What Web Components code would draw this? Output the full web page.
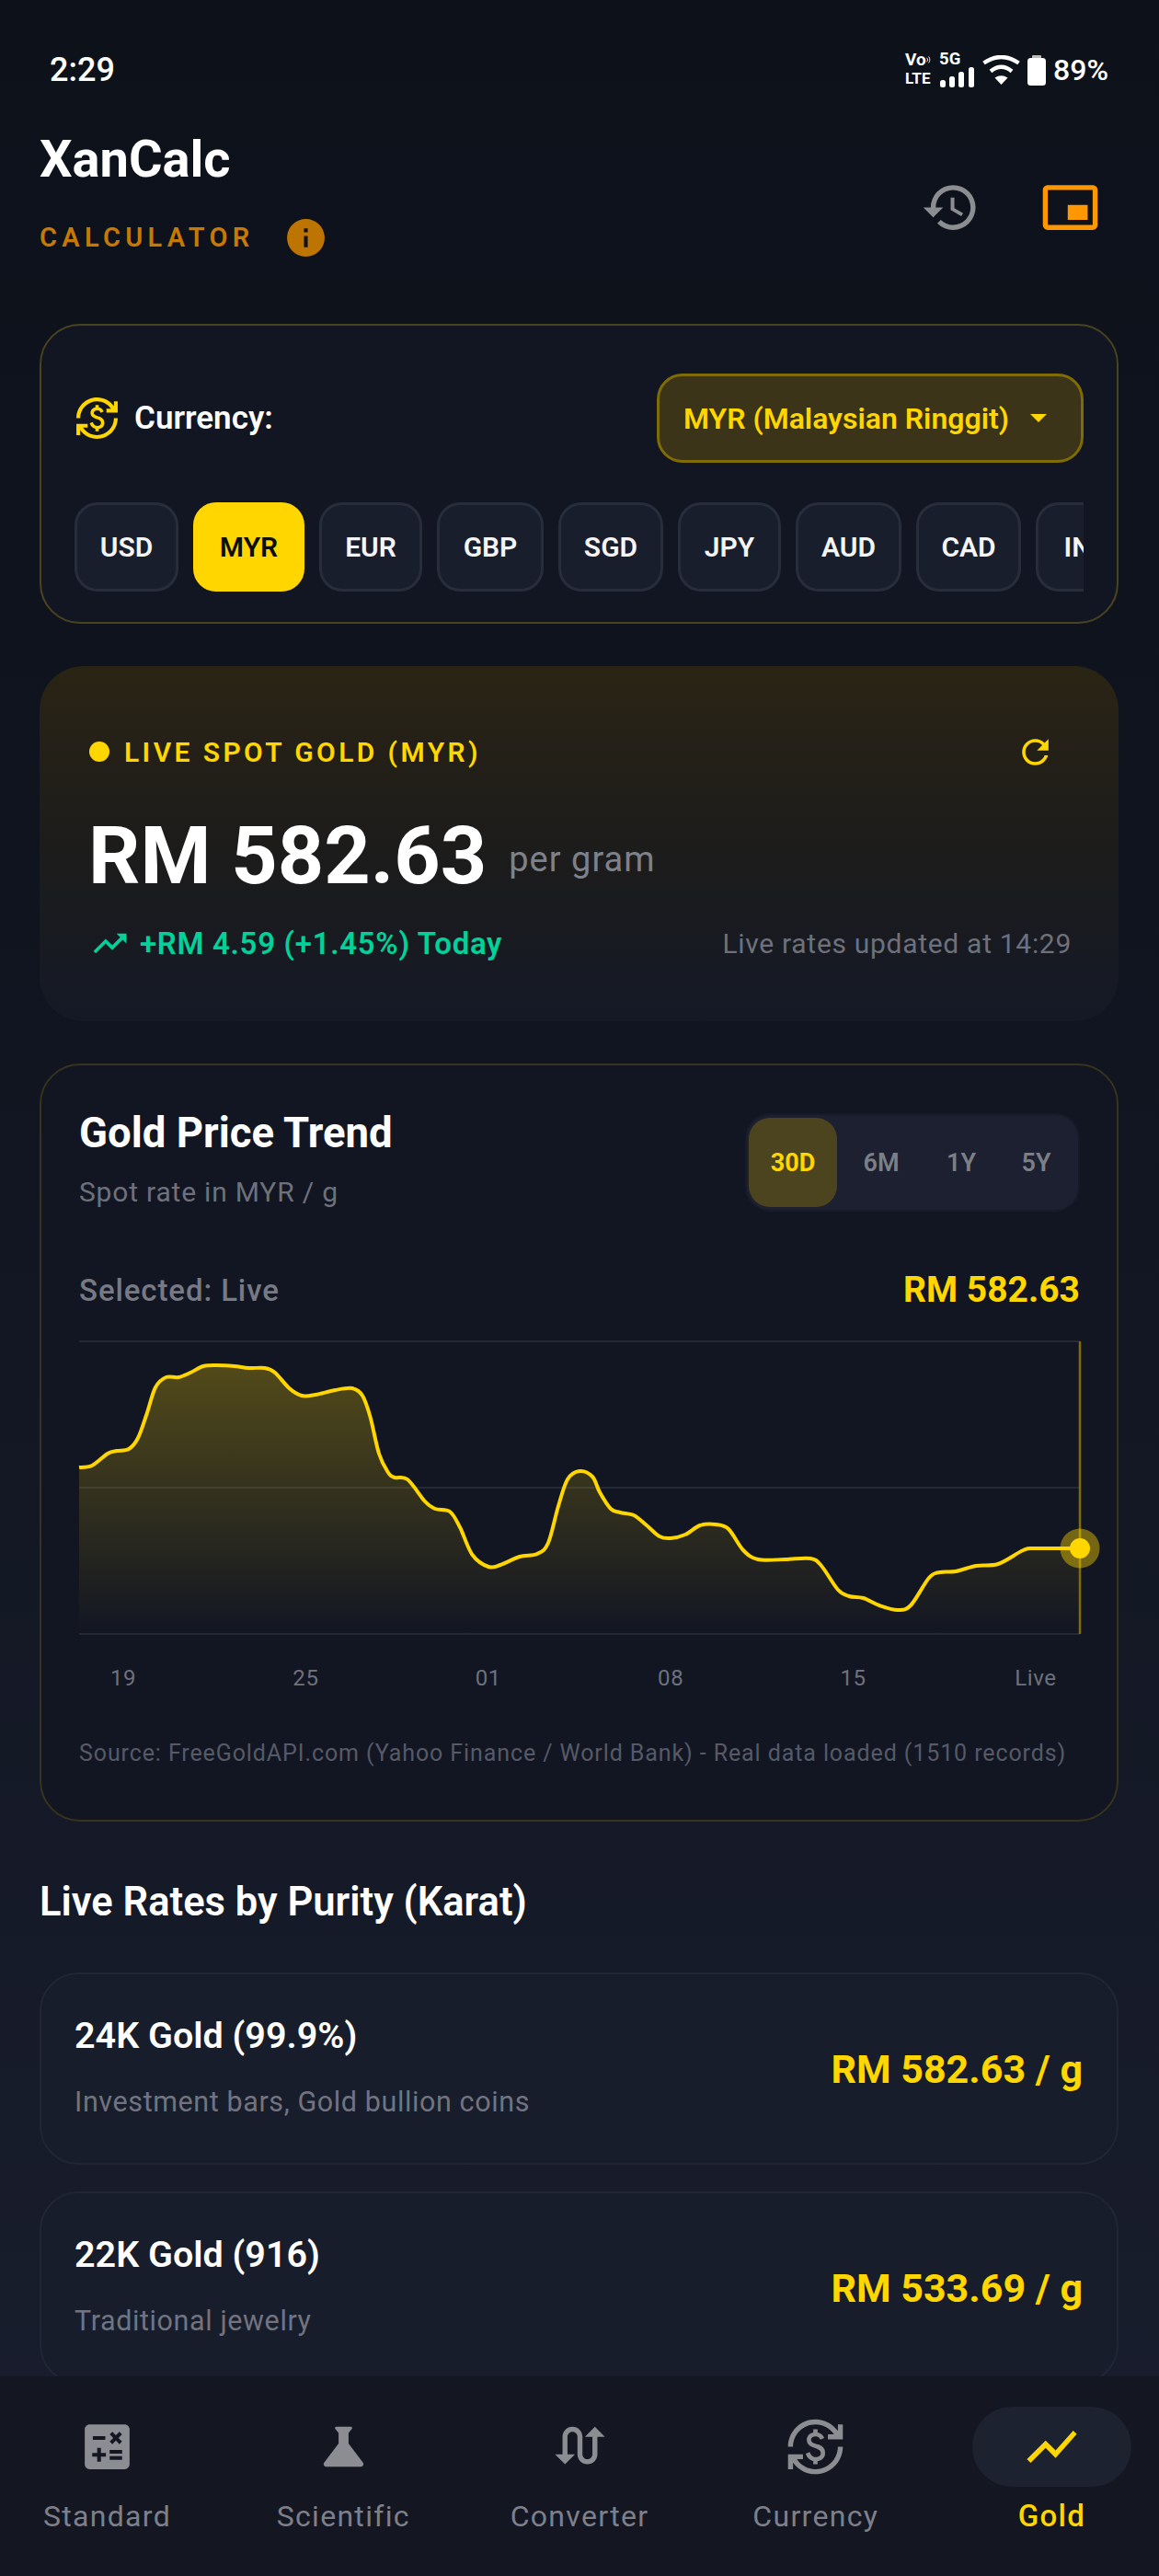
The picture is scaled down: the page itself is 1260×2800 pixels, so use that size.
<!DOCTYPE html>
<html>
<head>
<meta charset="utf-8">
<title>XanCalc</title>
<style>
  html, body { margin: 0; padding: 0; background: #0d111a; }
  body { font-family: Roboto, "Liberation Sans", sans-serif; color: #fff; }
</style>
</head>
<body>
<x-app>
  <x-status-bar></x-status-bar>
  <x-app-header></x-app-header>
  <x-currency-card></x-currency-card>
  <x-hero-card></x-hero-card>
  <x-trend-card></x-trend-card>
  <x-section-title>Live Rates by Purity (Karat)</x-section-title>
  <x-rate-card>
    <span slot="name">24K Gold (99.9%)</span>
    <span slot="note">Investment bars, Gold bullion coins</span>
    <span slot="price">RM 582.63 / g</span>
  </x-rate-card>
  <x-rate-card>
    <span slot="name">22K Gold (916)</span>
    <span slot="note">Traditional jewelry</span>
    <span slot="price">RM 533.69 / g</span>
  </x-rate-card>
  <x-bottom-nav slot="nav">
    <x-nav-item icon="calculate">Standard</x-nav-item>
    <x-nav-item icon="science">Scientific</x-nav-item>
    <x-nav-item icon="swap">Converter</x-nav-item>
    <x-nav-item icon="exchange">Currency</x-nav-item>
    <x-nav-item icon="chart" active>Gold</x-nav-item>
  </x-bottom-nav>
</x-app>

<script>
// material icon paths, 24 unit box
const ICONS = {
  history: "M13 3a9 9 0 0 0-9 9H1l3.89 3.89.07.14L9 12H6c0-3.87 3.13-7 7-7s7 3.13 7 7-3.13 7-7 7c-1.93 0-3.68-.79-4.94-2.06l-1.42 1.42A8.954 8.954 0 0 0 13 21a9 9 0 0 0 0-18zm-1 5v5l4.28 2.54.72-1.21-3.5-2.08V8H12z",
  pip: "M19 11h-8v6h8v-6zm4 8V4.98C23 3.88 22.1 3 21 3H3c-1.1 0-2 .88-2 1.98V19c0 1.1.9 2 2 2h18c1.1 0 2-.9 2-2zm-2 .02H3V4.97h18v14.05z",
  info: "M12 2C6.48 2 2 6.48 2 12s4.48 10 10 10 10-4.48 10-10S17.52 2 12 2zm1 15h-2v-6h2v6zm0-8h-2V7h2v2z",
  exchange: "M12.89 11.1c-1.78-.59-2.64-.96-2.64-1.9 0-1.02 1.11-1.39 1.81-1.39 1.31 0 1.79.99 1.9 1.34l1.58-.67c-.15-.44-.82-1.91-2.66-2.23V5h-1.75v1.26c-2.6.56-2.62 2.85-2.62 2.96 0 2.27 2.25 2.91 3.35 3.31 1.58.56 2.28 1.07 2.28 2.03 0 1.13-1.05 1.61-1.98 1.61-1.82 0-2.34-1.87-2.4-2.09l-1.66.67c.63 2.19 2.28 2.78 3.02 2.96V19h1.75v-1.24c.52-.09 3.02-.59 3.02-3.22.01-1.39-.6-2.61-2.6-3.44zM3 21H1v-6h6v2H4.52c1.61 2.41 4.36 4 7.48 4 4.97 0 9-4.03 9-9h2c0 6.08-4.92 11-11 11-3.72 0-7.01-1.85-9-4.67V21zm-2-9C1 5.92 5.92 1 12 1c3.72 0 7.01 1.85 9 4.67V3h2v6h-6V7h2.48C17.87 4.59 15.12 3 12 3c-4.97 0-9 4.03-9 9H1z",
  calculate: "M19 3H5c-1.1 0-2 .9-2 2v14c0 1.1.9 2 2 2h14c1.1 0 2-.9 2-2V5c0-1.1-.9-2-2-2zm-5.97 4.06L14.09 6l1.41 1.41L16.91 6l1.06 1.06-1.41 1.41 1.41 1.41-1.06 1.06-1.41-1.4-1.41 1.41-1.06-1.06 1.41-1.41-1.41-1.42zm-6.78.66h5v1.5h-5v-1.5zM11.5 16h-2v2H8v-2H6v-1.5h2v-2h1.5v2h2V16zm6.5 1.25h-5v-1.5h5v1.5zm0-2.5h-5v-1.5h5v1.5z",
  science: "M19.8 18.4L14 10.67V6.5l1.35-1.69c.26-.33.03-.81-.39-.81H9.04c-.42 0-.65.48-.39.81L10 6.5v4.17L4.2 18.4c-.49.66-.02 1.6.8 1.6h14c.82 0 1.29-.94.8-1.6z",
  swap: "M18 4l-4 4h3v7c0 1.1-.9 2-2 2s-2-.9-2-2V8c0-2.21-1.79-4-4-4S5 5.79 5 8v7H2l4 4 4-4H7V8c0-1.1.9-2 2-2s2 .9 2 2v7c0 2.21 1.79 4 4 4s4-1.79 4-4V8h3l-4-4z",
  chart: "M3.5 18.49l6-6.01 4 4L22 6.92l-1.41-1.41-7.09 7.97-4-4L2 16.99z",
  trending: "M16 6l2.29 2.29-4.88 4.88-4-4L2 16.59 3.41 18l6-6 4 4 6.3-6.29L22 12V6z",
  refresh: "M17.65 6.35C16.2 4.9 14.21 4 12 4c-4.42 0-7.99 3.58-7.99 8s3.57 8 7.99 8c3.73 0 6.84-2.55 7.73-6h-2.08c-.82 2.33-3.04 4-5.65 4-3.31 0-6-2.69-6-6s2.69-6 6-6c1.66 0 3.14.69 4.22 1.78L13 11h7V4l-2.35 2.35z"
};

// small helper, every element is just markup in an open shadow root
function define(tag, html, setup) {
  customElements.define(tag, class extends HTMLElement {
    constructor() {
      super();
      this.attachShadow({ mode: "open" });
      this.shadowRoot.innerHTML = typeof html === "function" ? html(this) : html;
    }
    connectedCallback() {
      if (setup) setup(this);
    }
  });
}

class XIcon extends HTMLElement {
  connectedCallback() {
    const size = this.getAttribute("size") || 65;
    const name = this.getAttribute("name");
    if (!this.shadowRoot) this.attachShadow({ mode: "open" });
    this.shadowRoot.innerHTML = `
      <style>:host { display: block; width: ${size}px; height: ${size}px; flex: none; }
      svg { display: block; width: 100%; height: 100%; fill: currentColor; }</style>
      <svg viewBox="0 0 24 24"><path d="${ICONS[name]}"/></svg>`;
  }
}
customElements.define("x-icon", XIcon);

define("x-app", `
  <style>
    :host { display: flex; flex-direction: column; width: 1260px; height: 2800px; overflow: hidden;
      background: linear-gradient(180deg, #0d111a 0%, #10141f 35%, #191e2e 100%); }
    .scroll { flex: 1; min-height: 0; overflow: hidden; padding: 0 44px 0 43px; }
  </style>
  <div class="scroll"><slot></slot></div>
  <slot name="nav"></slot>
`);

define("x-status-bar", `
  <style>
    :host { display: flex; justify-content: space-between; align-items: center; height: 48px;
      padding: 52px 11px 0; color: #fff; }
    .time { font-size: 36px; font-weight: 500; }
    .right { display: flex; align-items: center; height: 48px; }
    .net { display: flex; flex-direction: column; font-weight: 700; line-height: 20px; width: 29px; margin-top: -2px; }
    .vo { font-size: 19px; display: flex; align-items: center; white-space: nowrap; }
    .lte { font-size: 17px; }
    .cell { position: relative; width: 38px; height: 33px; margin-left: 8px; }
    .cell span { font-size: 18.5px; font-weight: 700; display: block; line-height: 19px; margin-top: -5px; }
    svg { display: block; }
    .wifi { margin-left: 9px; }
    .batt { margin-left: 8px; }
    .pct { font-size: 32px; font-weight: 500; margin-left: 8px; }
  </style>
  <div class="time">2:29</div>
  <div class="right">
    <div class="net">
      <div class="vo">Vo<svg width="9" height="14" viewBox="0 0 10 14" fill="none" stroke="#fff" stroke-width="1.4"><path d="M1 3.5a5 5 0 0 1 0 7M4 1.5a8 8 0 0 1 0 11"/></svg></div>
      <div class="lte">LTE</div>
    </div>
    <div class="cell">
      <span>5G</span>
      <svg width="38" height="22" viewBox="0 0 38 22" fill="#fff" style="position:absolute;left:0;bottom:-2px">
        <rect x="1" y="14" width="6" height="8" rx="2.5"/><rect x="11" y="10" width="6" height="12" rx="2.5"/>
        <rect x="21" y="5" width="6" height="17" rx="2.5"/><rect x="32" y="0" width="6" height="22" rx="2.5"/>
      </svg>
    </div>
    <svg class="wifi" width="41" height="32" viewBox="0 0 41 32">
      <path d="M1.5 8.5Q20.5-4.5 39.5 8.5M9 17.5Q20.5 8 32 17.5" fill="none" stroke="#fff" stroke-width="4.4"/>
      <path d="M13.5 24.5Q20.5 20 27.5 24.5L20.5 32Z" fill="#fff"/>
    </svg>
    <svg class="batt" width="20" height="33" viewBox="0 0 20 33" fill="#fff">
      <rect x="5" y="0" width="10" height="4" rx="1" fill="#bbb"/><rect x="0" y="3" width="20" height="30" rx="3.5"/>
    </svg>
    <div class="pct">89%</div>
  </div>
`);

define("x-app-header", `
  <style>
    :host { display: flex; justify-content: space-between; align-items: flex-start; margin: 0 -12px 47px 0;
      padding: 45px 0 25px; }
    h1 { margin: 0; font-size: 56px; font-weight: 700; line-height: 56px; color: #fff; }
    .sub { display: flex; align-items: center; margin-top: 35px; height: 44px; }
    .sub span { font-size: 29px; font-weight: 600; letter-spacing: 5.3px; color: #c67a05; }
    .sub x-icon { color: #bd7400; margin-left: 32px; }
    .acts { display: flex; margin: 15px 0 -10px; }
    .btn { width: 130px; height: 130px; display: flex; align-items: center; justify-content: center; }
    .hist { color: #8b8d90; }
    .pip { color: #ff9800; }
  </style>
  <div>
    <h1>XanCalc</h1>
    <div class="sub"><span>CALCULATOR</span><x-icon name="info" size="49"></x-icon></div>
  </div>
  <div class="acts">
    <div class="btn hist"><x-icon name="history" size="65"></x-icon></div>
    <div class="btn pip"><x-icon name="pip" size="65"></x-icon></div>
  </div>
`);

define("x-chip", `
  <style>
    :host { display: flex; align-items: center; justify-content: center; flex: none; box-sizing: border-box;
      height: 97px; border: 3px solid #282d3c; border-radius: 25px; background: #191e2d;
      font-size: 30px; font-weight: 600; color: #f4f5f7; }
    :host([active]) { background: #ffd600; border-color: #ffd600; color: #0d0d0d; }
  </style>
  <slot></slot>
`);

define("x-currency-card", `
  <style>
    :host { display: block; box-sizing: border-box; height: 326px; padding: 52px 36px 0;
      background: #121622; border: 2px solid #4a4320; border-radius: 44px; }
    .top { display: flex; align-items: center; justify-content: space-between; height: 97px; }
    .label { display: flex; align-items: center; gap: 16px; font-size: 35px; font-weight: 600; color: #fff; }
    .label x-icon { color: #ffd600; }
    .select { box-sizing: border-box; display: flex; align-items: center; width: 464px; height: 97px;
      padding: 0 37px 0 26px; justify-content: space-between; background: #3b3418; border: 3px solid #7f6c05;
      border-radius: 28px; font-size: 32px; font-weight: 600; color: #ffd600; }
    .caret { width: 0; height: 0; border-left: 9px solid transparent; border-right: 9px solid transparent; border-top: 9px solid #ffd600; }
    .chips { display: flex; gap: 16px; margin-top: 43px; overflow: hidden; }
  </style>
  <div class="top">
    <div class="label"><x-icon name="exchange" size="49"></x-icon>Currency:</div>
    <div class="select"><span>MYR (Malaysian Ringgit)</span><div class="caret"></div></div>
  </div>
  <div class="chips">
    <x-chip style="width:113px">USD</x-chip><x-chip style="width:121px" active>MYR</x-chip><x-chip style="width:112px">EUR</x-chip><x-chip style="width:116px">GBP</x-chip>
    <x-chip style="width:114px">SGD</x-chip><x-chip style="width:112px">JPY</x-chip><x-chip style="width:115px">AUD</x-chip><x-chip style="width:114px">CAD</x-chip><x-chip style="width:110px">INR</x-chip>
  </div>
`);

define("x-hero-card", `
  <style>
    :host { display: block; box-sizing: border-box; height: 386px; margin-top: 46px; padding: 73px 51px 0 52px;
      border-radius: 48px; background: linear-gradient(180deg, #2a2414 0%, #1d1c1b 50%, #141926 100%); }
    .live { display: flex; align-items: center; height: 40px; }
    .dot { width: 22px; height: 22px; border-radius: 50%; background: #ffd600; margin: 0 16px 0 2px; }
    .live span { flex: 1; font-size: 30px; font-weight: 600; letter-spacing: 3.4px; color: #ffd600; }
    .live x-icon { color: #ffd600; margin-right: 18px; }
    .price { display: flex; align-items: center; height: 100px; line-height: 100px; margin-top: 43px; padding-left: 1px; }
    .price b { font-size: 88px; font-weight: 700; color: #fff; }
    .price span { font-size: 38px; margin: 8px 0 0 24px; color: #7f8189; letter-spacing: 1px; }
    .foot { display: flex; align-items: center; height: 40px; margin-top: 25px; }
    .foot x-icon { color: #00d29a; margin: 0 11px 0 3px; }
    .up { flex: 1; font-size: 33px; font-weight: 600; letter-spacing: .7px; color: #00d29a; }
    .upd { font-size: 30px; color: #6e717b; letter-spacing: .7px; }
  </style>
  <div class="live"><div class="dot"></div><span>LIVE SPOT GOLD (MYR)</span><x-icon name="refresh" size="43"></x-icon></div>
  <div class="price"><b>RM 582.63</b><span>per gram</span></div>
  <div class="foot"><x-icon name="trending" size="43"></x-icon><div class="up">+RM 4.59 (+1.45%) Today</div><div class="upd">Live rates updated at 14:29</div></div>
`);

define("x-gold-chart", `
  <style>
    :host { display: block; width: 1088px; height: 318px; }
    svg { display: block; overflow: visible; }
  </style>
  <svg width="1088" height="318" viewBox="86 1458 1088 318">
    <defs>
      <linearGradient id="fill" x1="0" y1="0" x2="0" y2="1">
        <stop offset="0" stop-color="#ffd600" stop-opacity=".27"/>
        <stop offset="1" stop-color="#ffd600" stop-opacity="0"/>
      </linearGradient>
    </defs>
    <path d="M86 1458H1174M86 1617H1174M86 1776H1174" stroke="#242936" stroke-width="2" fill="none"/>
    <path id="area" fill="url(#fill)"/>
    <path d="M1174 1458V1776" stroke="#7f6c05" stroke-width="2.5"/>
    <path id="line" fill="none" stroke="#ffd600" stroke-width="4" stroke-linejoin="round"/>
    <circle cx="1174" cy="1683" r="21.5" fill="#ffd600" fill-opacity=".42"/>
    <circle cx="1174" cy="1683" r="11" fill="#ffd600"/>
  </svg>
`, el => {
  // points traced from the price curve, smoothed with catmull-rom
  const pts = [[86,1595],[100,1593],[117,1580],[127,1577],[140,1575],[150,1563],[159.5,1537],[169,1508],[180.5,1497],[194,1497],[207,1492],[221,1485],[236,1484],[255,1485],[270.5,1487],[288,1487],[299,1492],[314.5,1509],[328,1517],[343,1516],[364,1511],[383,1509],[394,1517],[402.5,1540],[412,1580],[421.6,1600],[429,1606],[443,1608],[462,1632],[473,1640],[489,1643],[500,1660],[513.5,1690],[531,1703],[544,1701],[565,1692],[584,1689],[596,1677],[607,1637],[617,1608],[630,1599],[644,1605],[652,1622],[664,1640],[674,1644],[689,1647],[703,1658],[717,1670],[729,1672],[745,1668],[761,1658],[778,1657],[792,1662],[808,1685],[824,1695],[853.5,1695],[881,1694],[893,1702],[911,1728],[923,1735],[938.5,1737],[956,1745],[976,1750],[990,1745],[1010,1715],[1021.6,1709],[1039,1708],[1061,1702],[1085,1700],[1112.5,1685],[1126,1683],[1174,1683]];
  let d = `M${pts[0][0]} ${pts[0][1]}`;
  for (let i = 0; i < pts.length - 1; i++) {
    const p0 = pts[i - 1] || pts[i], p1 = pts[i], p2 = pts[i + 1], p3 = pts[i + 2] || p2;
    const c1x = p1[0] + (p2[0] - p0[0]) / 6, c1y = p1[1] + (p2[1] - p0[1]) / 6;
    const c2x = p2[0] - (p3[0] - p1[0]) / 6, c2y = p2[1] - (p3[1] - p1[1]) / 6;
    d += `C${c1x.toFixed(1)} ${c1y.toFixed(1)} ${c2x.toFixed(1)} ${c2y.toFixed(1)} ${p2[0]} ${p2[1]}`;
  }
  el.shadowRoot.getElementById("line").setAttribute("d", d);
  el.shadowRoot.getElementById("area").setAttribute("d", d + "V1776H86Z");
});

define("x-trend-card", `
  <style>
    :host { display: block; box-sizing: border-box; height: 824px; margin-top: 46px; padding: 52px 40px 0 41px;
      background: #121622; border: 2px solid #38331e; border-radius: 44px; }
    .head { display: flex; justify-content: space-between; align-items: flex-start; }
    h2 { margin: 3px 0 0; font-size: 45.5px; font-weight: 700; line-height: 38px; color: #fff; }
    .rate { margin-top: 25px; font-size: 30px; line-height: 40px; color: #6e717b; letter-spacing: .8px; }
    .seg { box-sizing: border-box; display: flex; align-items: stretch; width: 364px; height: 107px; padding: 3px 3px 3px 2px;
      background: #1c2030; border: 2px solid #171b29; border-radius: 27px; font-size: 27px; font-weight: 600; color: #7d7f86; }
    .seg div { display: flex; align-items: center; justify-content: center; }
    .seg .on { width: 96px; background: #4c441f; color: #ffd600; border-radius: 23px; font-weight: 700; }
    .sel { display: flex; justify-content: space-between; align-items: center; height: 44px; margin-top: 63px; }
    .sel span { font-size: 33px; font-weight: 500; color: #777a84; letter-spacing: .9px; }
    .sel b { font-size: 39px; font-weight: 700; color: #ffd600; }
    x-gold-chart { margin-top: 34px; }
    .axis { display: flex; justify-content: space-between; margin-top: 32px; font-size: 24px; line-height: 32px; color: #6e717b; letter-spacing: .6px; }
    .axis span { width: 96px; text-align: center; }
    .src { margin-top: 51px; font-size: 25px; line-height: 30px; color: #565a67; letter-spacing: .9px; white-space: nowrap; }
  </style>
  <div class="head">
    <div><h2>Gold Price Trend</h2><div class="rate">Spot rate in MYR / g</div></div>
    <div class="seg"><div class="on">30D</div><div style="width:96px">6M</div><div style="width:78px">1Y</div><div style="width:85px">5Y</div></div>
  </div>
  <div class="sel"><span>Selected: Live</span><b>RM 582.63</b></div>
  <x-gold-chart></x-gold-chart>
  <div class="axis"><span>19</span><span>25</span><span>01</span><span>08</span><span>15</span><span>Live</span></div>
  <div class="src">Source: FreeGoldAPI.com (Yahoo Finance / World Bank) - Real data loaded (1510 records)</div>
`);

define("x-section-title", `
  <style>
    :host { display: block; margin: 63px 0 51px; height: 50px; line-height: 50px; font-size: 43.5px; font-weight: 600; color: #fff; }
  </style>
  <slot></slot>
`);

define("x-rate-card", `
  <style>
    :host { display: flex; align-items: center; justify-content: space-between; box-sizing: border-box; height: 209px;
      margin-bottom: 29px; padding: 0 37px 0 36px; background: #181d2c; border: 2px solid #212636; border-radius: 42px; }
    .name { font-size: 39.5px; font-weight: 600; line-height: 44px; color: #fff; }
    .note { margin-top: 28px; font-size: 30.5px; line-height: 44px; color: #717480; letter-spacing: .6px; }
    .price { font-size: 43px; font-weight: 700; color: #ffd600; }
  </style>
  <div>
    <div class="name"><slot name="name"></slot></div>
    <div class="note"><slot name="note"></slot></div>
  </div>
  <div class="price"><slot name="price"></slot></div>
`);

define("x-bottom-nav", `
  <style>
    :host { display: flex; flex: none; justify-content: space-between; box-sizing: border-box; height: 217px;
      padding: 33px 30px 0; background: #141722; }
  </style>
  <slot></slot>
`);

define("x-nav-item", el => `
  <style>
    :host { display: flex; flex-direction: column; align-items: center; width: 173px; }
    .pill { display: flex; align-items: center; justify-content: center; width: 173px; height: 87px; border-radius: 44px; color: #8b8d92; }
    .label { margin-top: 12px; font-size: 32px; line-height: 40px; letter-spacing: 1.3px; color: #7d808a; white-space: nowrap; }
    :host([active]) .pill { background: #1d2230; color: #ffd600; }
    :host([active]) .label { color: #ffd600; font-weight: 500; font-size: 33px; }
  </style>
  <div class="pill"><x-icon name="${el.getAttribute("icon")}" size="65"></x-icon></div>
  <div class="label"><slot></slot></div>
`);
</script>
</body>
</html>
